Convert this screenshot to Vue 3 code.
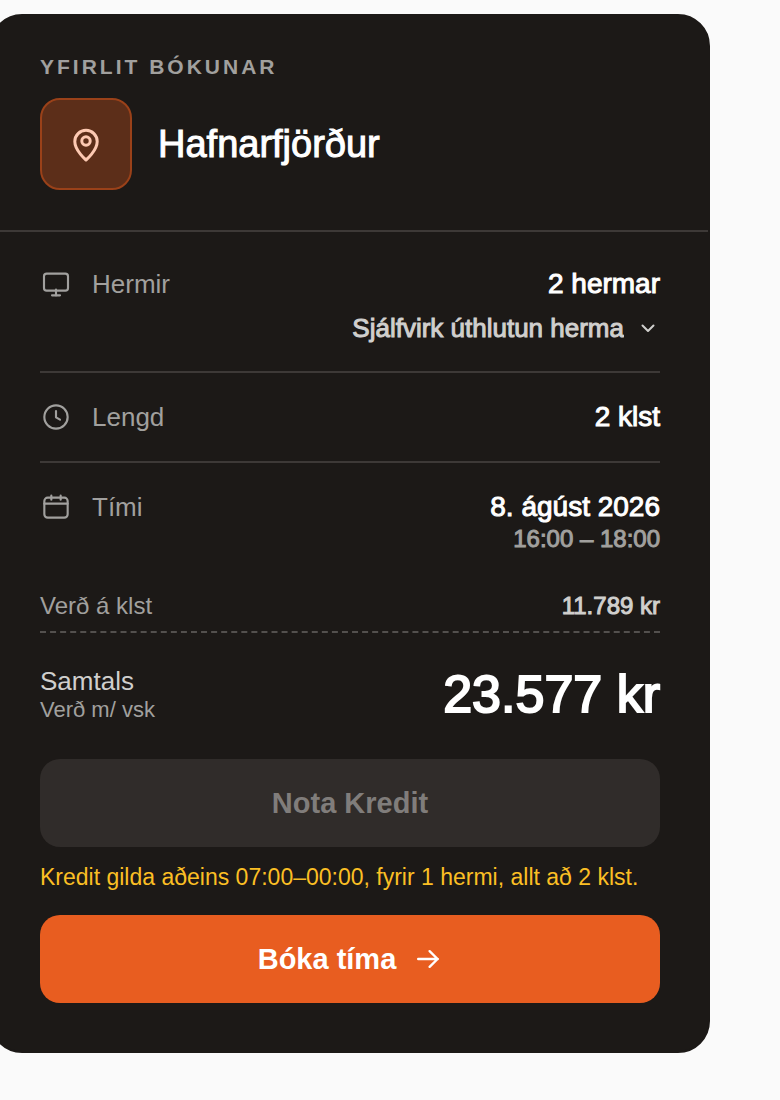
<template>
  <main class="page">
    <section class="summary-card" aria-labelledby="summary-title">
      <header class="summary-header">
        <h2 id="summary-title" class="eyebrow">Yfirlit bókunar</h2>
        <div class="location">
          <div class="location-icon">
            <svg viewBox="0 0 40 40" aria-hidden="true">
              <path
                d="M20 36C20 36 8.8 26.5 8.8 17.5A11.2 11.2 0 0 1 31.2 17.5C31.2 26.5 20 36 20 36Z"
              />
              <circle cx="20" cy="17" r="4.2" />
            </svg>
          </div>
          <p class="location-name">{{ booking.location }}</p>
        </div>
      </header>

      <div class="summary-body">
        <dl class="details">
          <div class="detail-row">
            <dt class="detail-label">
              <svg class="detail-icon" viewBox="0 0 24 24" aria-hidden="true">
                <rect x="3" y="4.25" width="18" height="12.75" rx="2" />
                <path d="M12 16.25v4.25" />
                <path d="M9 20.5h6" />
              </svg>
              Hermir
            </dt>
            <dd class="detail-value">
              <span class="value-main">{{ booking.simulators }} hermar</span>
              <div class="assign">
                <select
                  v-model="assignment"
                  class="assign-select"
                  aria-label="Úthlutun herma"
                >
                  <option v-for="o in assignments" :key="o" :value="o">
                    {{ o }}
                  </option>
                </select>
                <svg class="chevron" viewBox="0 0 24 24" aria-hidden="true">
                  <path d="m6.5 9.5 5.5 5.5 5.5-5.5" />
                </svg>
              </div>
            </dd>
          </div>

          <div class="detail-row">
            <dt class="detail-label">
              <svg class="detail-icon" viewBox="0 0 24 24" aria-hidden="true">
                <circle cx="12" cy="12" r="8.75" />
                <path d="M12 7.5v4.75L15 14" />
              </svg>
              Lengd
            </dt>
            <dd class="detail-value">
              <span class="value-main">{{ booking.hours }} klst</span>
            </dd>
          </div>

          <div class="detail-row">
            <dt class="detail-label">
              <svg class="detail-icon" viewBox="0 0 24 24" aria-hidden="true">
                <rect x="3.25" y="5" width="17.5" height="15" rx="2.5" />
                <path d="M3.25 9.5h17.5" />
                <path d="M8.5 3.5v3" />
                <path d="M15.5 3.5v3" />
              </svg>
              Tími
            </dt>
            <dd class="detail-value">
              <span class="value-main">{{ booking.date }}</span>
              <span class="value-sub">{{ booking.from }} – {{ booking.to }}</span>
            </dd>
          </div>
        </dl>

        <div class="price-row">
          <span>Verð á klst</span>
          <span class="price-value">{{ formatKr(booking.hourPrice) }}</span>
        </div>

        <div class="total-row">
          <div>
            <div class="total-label">Samtals</div>
            <div class="total-note">Verð m/ vsk</div>
          </div>
          <strong class="total-value">{{ formatKr(booking.total) }}</strong>
        </div>

        <button type="button" class="btn credit" disabled>Nota Kredit</button>
        <p class="credit-note">
          Kredit gilda aðeins 07:00–00:00, fyrir 1 hermi, allt að 2 klst.
        </p>
        <button type="button" class="btn book">
          Bóka tíma
          <svg class="arrow" viewBox="0 0 28 28" aria-hidden="true">
            <path d="M4.2 14h19.6M15.6 6.2l8 7.8-8 7.8" />
          </svg>
        </button>
      </div>
    </section>
  </main>
</template>

<script setup>
import { ref, reactive } from "vue";

const booking = reactive({
  location: "Hafnarfjörður",
  simulators: 2,
  hours: 2,
  date: "8. ágúst 2026",
  from: "16:00",
  to: "18:00",
  hourPrice: 11789,
  total: 23577,
});

const assignments = ["Sjálfvirk úthlutun herma", "Velja herma"];
const assignment = ref(assignments[0]);

// 23577 -> "23.577 kr"
function formatKr(n) {
  return String(n).replace(/\B(?=(\d{3})+$)/g, ".") + " kr";
}
</script>

<style>
body {
  margin: 0;
  background: #fafafa;
}
</style>

<style scoped>
.page {
  padding: 14px 70px 0 0;
  overflow-x: hidden;
  font-family: "Liberation Sans", Arial, sans-serif;
}
.summary-card {
  margin-left: -10px;
  background: #1c1917;
  border: 2px solid #1c1917;
  border-radius: 32px;
  color: #fff;
}
svg {
  fill: none;
  stroke: currentColor;
  stroke-linecap: round;
  stroke-linejoin: round;
  flex-shrink: 0;
}

/* header */
.summary-header {
  padding: 36px 48px 40px;
  border-bottom: 2px solid #3d3937;
}
.eyebrow {
  margin: 0 0 16px;
  font-size: 21px;
  line-height: 30px;
  font-weight: 700;
  letter-spacing: 3px;
  text-transform: uppercase;
  color: #a1a09e;
}
.location {
  display: flex;
  align-items: center;
  gap: 26px;
}
.location-icon {
  display: flex;
  align-items: center;
  justify-content: center;
  box-sizing: border-box;
  width: 92px;
  height: 92px;
  background: #5c2e19;
  border: 2px solid #9a4119;
  border-radius: 20px;
  color: #fdc9b2;
}
.location-icon svg {
  width: 40px;
  height: 40px;
  stroke-width: 3;
}
.location-name {
  margin: 0;
  font-size: 38px;
  line-height: 48px;
}

/* medium weight */
.location-name,
.value-main,
.value-sub,
.assign-select,
.price-value {
  -webkit-text-stroke: 1px currentColor;
}

/* details */
.summary-body {
  padding: 8px 48px 48px;
}
.details {
  margin: 0;
}
.detail-row {
  display: flex;
  justify-content: space-between;
  padding: 26px 0;
}
.detail-row + .detail-row {
  border-top: 2px solid #3d3937;
}
.detail-label {
  display: flex;
  align-items: center;
  gap: 20px;
  height: 36px;
  font-size: 26px;
  color: #a1a09e;
}
.detail-icon {
  width: 32px;
  height: 32px;
  stroke-width: 1.6;
}
.detail-value {
  display: flex;
  flex-direction: column;
  align-items: flex-end;
  margin: 0;
}
.value-main {
  font-size: 28px;
  line-height: 36px;
}
.value-sub {
  font-size: 24px;
  line-height: 28px;
  color: #a1a09e;
}
.assign {
  position: relative;
  display: flex;
  margin-top: 9px;
  color: #d0cfcd;
}
.assign-select {
  appearance: none;
  field-sizing: content;
  height: 34px;
  padding: 0 36px 0 0;
  border: none;
  background: transparent;
  color: inherit;
  font-family: inherit;
  font-size: 26px;
  line-height: 34px;
  cursor: pointer;
}
.assign-select option {
  background: #1c1917;
}
.chevron {
  position: absolute;
  right: 0;
  top: 5px;
  width: 24px;
  height: 24px;
  stroke-width: 2;
  pointer-events: none;
}

/* prices */
.price-row {
  display: flex;
  justify-content: space-between;
  margin-top: 12px;
  padding-bottom: 10px;
  border-bottom: 2px dashed #53504e;
  font-size: 24px;
  line-height: 30px;
  color: #a1a09e;
}
.price-value {
  color: #d0cfcd;
}
.total-row {
  display: flex;
  justify-content: space-between;
  align-items: center;
  margin: 32px 0 36px;
}
.total-label {
  font-size: 26px;
  line-height: 32px;
  color: #d0cfcd;
}
.total-note {
  font-size: 22px;
  line-height: 26px;
  color: #a1a09e;
}
.total-value {
  font-size: 52px;
  line-height: 56px;
  font-weight: 400;
  -webkit-text-stroke: 2px currentColor;
}

/* actions */
.btn {
  display: flex;
  align-items: center;
  justify-content: center;
  gap: 18px;
  width: 100%;
  height: 88px;
  padding: 0 24px;
  border: none;
  border-radius: 20px;
  font-family: inherit;
  font-size: 29px;
  font-weight: 700;
}
.btn.credit {
  background: #302c2a;
  color: #807d7b;
}
.btn.book {
  background: #e85d20;
  color: #fff;
  cursor: pointer;
}
.arrow {
  width: 28px;
  height: 28px;
  stroke-width: 2.4;
}
.credit-note {
  margin: 14px 0 22px;
  font-size: 23px;
  line-height: 32px;
  color: #fbbf24;
}
</style>
